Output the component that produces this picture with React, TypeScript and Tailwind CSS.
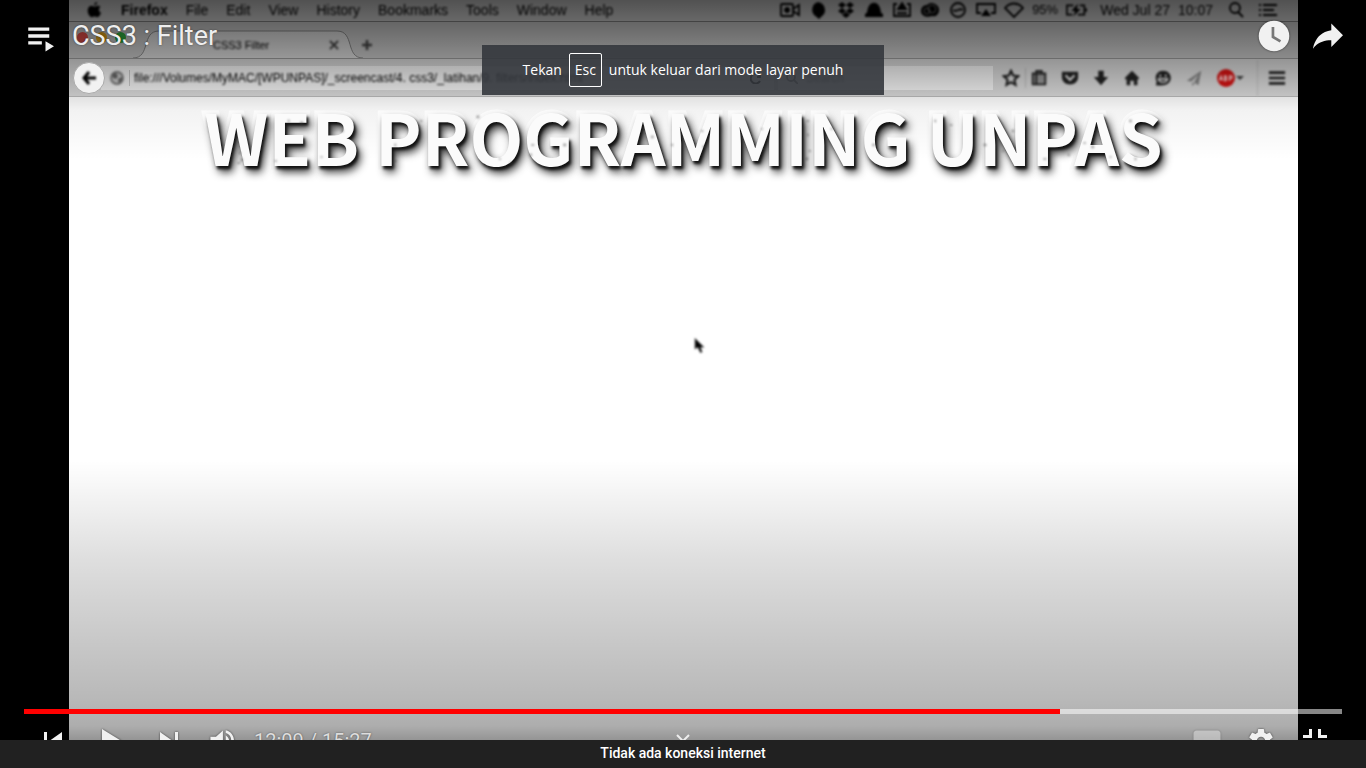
import React from "react";

type IconProps = { children: React.ReactNode; className?: string; box?: string };

const Glyph = ({ children, className = "size-5", box = "0 0 20 20" }: IconProps) => (
  <svg viewBox={box} className={`shrink-0 ${className}`} fill="none" stroke="currentColor" strokeWidth="1.8" aria-hidden="true">
    {children}
  </svg>
);

const PlayerIcon = ({ children, className = "size-[54px]" }: IconProps) => (
  <svg viewBox="0 0 36 36" className={`shrink-0 drop-shadow-[0_0_1px_rgba(0,0,0,0.6)] ${className}`} fill="#f1f1f1" aria-hidden="true">
    {children}
  </svg>
);

const menus = ["File", "Edit", "View", "History", "Bookmarks", "Tools", "Window", "Help"];

const specks = [
  [36, 52], [38, 59], [35, 62], [85, 20], [72, 60], [98, 22], [118, 56], [139, 30], [192, 60], [192, 44], [218, 20], [275, 16],
  [297, 58], [328, 54], [330, 44], [308, 62], [352, 24], [362, 44], [434, 58], [450, 36], [464, 60], [470, 44], [500, 30], [502, 46],
  [560, 28], [562, 48], [606, 20], [606, 34], [608, 50], [605, 58], [630, 28], [672, 44], [690, 26], [734, 20], [750, 24], [784, 44],
  [802, 50], [812, 30], [844, 58], [868, 54], [884, 42], [892, 46], [910, 56], [930, 20], [942, 48], [935, 58],
];

function MenuBar() {
  return (
    <div className="flex h-[22px] items-center justify-between border-b border-[#8a8a8a] bg-[#d6d6d6] pr-5 pb-px pl-4 text-sm leading-5 text-black">
      <div className="flex items-center gap-[18px] blur-[1px]">
        <Glyph className="size-[18px]" box="0 0 18 18">
          <path fill="currentColor" stroke="none" d="M12.2 1c.1 1.600-1.300 3.200-3 3.200C9 2.600 10.500 1.100 12.200 1zM15.500 6.100c-2.300 1.400-2 4.600.5 5.600-.6 1.800-2.100 4.500-3.700 4.500-1.100 0-1.500-.7-2.800-.7s-1.700.7-2.700.7C4.700 16.200 2.700 12.600 2.700 9.600c0-3 1.900-4.900 3.900-4.900 1.200 0 2.100.8 2.900.8.8 0 1.900-.9 3.400-.8 1 0 2 .5 2.600 1.400z" />
        </Glyph>
        <b>Firefox</b>
        {menus.map((m) => (
          <span key={m}>{m}</span>
        ))}
      </div>
      <div className="flex items-center gap-2 blur-[1px]">
        <Glyph><rect x="1" y="4" width="12" height="12" rx="1" /><path d="M13 9l6-4v10l-6-4" /><circle cx="7" cy="10" r="2" fill="currentColor" /></Glyph>
        <Glyph><path fill="#000" stroke="none" d="M10 2a8 8 0 0 1 3.500 14.500L11 19l-3-2.500A8 8 0 0 1 10 2z" /></Glyph>
        <Glyph><path fill="currentColor" stroke="none" d="M6 2l4 3-4 3-4-3zM14 2l4 3-4 3-4-3zM6 8l4 3-4 3-4-3zM14 8l4 3-4 3-4-3zM6 15l4-3 4 3-4 3z" /></Glyph>
        <Glyph><path fill="currentColor" stroke="none" d="M1 14c3-1 2-4 3-6 2-7 10-7 12 0 1 2 0 5 3 6v3H1z" /></Glyph>
        <Glyph><path d="M5 4H2v12h16V4h-3M5 13h10" /><path fill="currentColor" d="M10 3l4 6H6z" /></Glyph>
        <Glyph><path fill="currentColor" stroke="none" d="M7 5c5-5 13 0 12 6-1 4-3 6-7 5-5 2-11 0-11-5 0-3 2-6 6-6z" /><circle cx="7" cy="11" r="3" stroke="#888" strokeWidth="1" /><circle cx="12" cy="9" r="4" stroke="#888" strokeWidth="1" /></Glyph>
        <Glyph><circle cx="10" cy="10" r="7" /><path d="M5 10c4 3 6-3 10 0" /></Glyph>
        <Glyph><path d="M5 13H1V4h18v9h-4" /><path fill="#000" stroke="none" d="M10 9l5 7H5z" /></Glyph>
        <Glyph><path d="M1 8c5-6 13-6 18 0l-9 9z" /></Glyph>
        <span className="text-[13px]">95%</span>
        <Glyph className="h-5 w-[22px]" box="0 0 24 20"><path d="M8 5H1v10h6M15 5h5v10h-7M22 8v4" /><path fill="currentColor" stroke="none" d="M13 3L6 11h4l-2 6 8-8h-4z" /></Glyph>
        <span className="pl-1">Wed Jul 27</span>
        <span className="pr-[5px]">10:07</span>
        <Glyph><circle cx="9" cy="8" r="5" /><path d="M12 12l5 5" /></Glyph>
        <Glyph className="ml-1 size-5"><path d="M1 5h2M5 5h14M1 10h2M5 10h11M1 15h2M5 15h14" strokeWidth="2" /></Glyph>
      </div>
    </div>
  );
}

function TabStrip() {
  return (
    <div className="flex h-[37px] items-end border-b border-[#a0a0a0] bg-[#cfcfcf] text-[11px] text-black">
      <div className="flex h-[37px] w-16 items-center gap-2 pb-1 pl-2">
        <span className="size-[11px] rounded-full bg-[#e8504a]" />
        <span className="size-[11px] rounded-full bg-[#e8a91c]" />
        <span className="size-[11px] rounded-full bg-[#32b441]" />
      </div>
      <div className="relative h-7 w-[232px]">
        <svg className="absolute inset-0 size-full" viewBox="0 0 232 28" fill="#e2e2e2" stroke="#8d8d8d" aria-hidden="true">
          <path d="M0 28C18 28 8 1 26 1H204C222 1 212 28 230 28" />
        </svg>
        <div className="relative flex h-7 items-center justify-between pt-[2px] pr-[25px] pl-20 blur-[1px]">
          <span>CSS3 Filter</span>
          <Glyph className="size-3 text-[#444]" box="0 0 12 12"><path d="M2 2l8 8M10 2l-8 8" /></Glyph>
        </div>
      </div>
      <div className="-ml-1 flex h-7 items-center pt-[2px] text-[#444]">
        <Glyph className="size-3 blur-[1px]" box="0 0 12 12"><path d="M6 1v10M1 6h10" strokeWidth="2.500" /></Glyph>
      </div>
    </div>
  );
}

function Toolbar() {
  return (
    <div className="flex h-[38px] items-center border-b border-[#bdbdbd] bg-[#dcdcdc] pr-3 pl-1 text-xs text-black">
      <div className="z-10 flex size-8 shrink-0 items-center justify-center rounded-full border border-[#aaa] bg-[#f2f2f2]">
        <Glyph className="size-4 blur-[1px]" box="0 0 16 16"><path d="M8 2L3 8l5 6M3 8h12" strokeWidth="3" /></Glyph>
      </div>
      <div className="-ml-1 flex h-6 min-w-0 flex-1 items-center bg-[#f6f6f6] pl-2">
        <Glyph className="size-4 text-[#777] blur-[1px]" box="0 0 16 16"><circle cx="8" cy="8" r="6" fill="#ccc" /><path fill="#666" stroke="none" d="M3 4l4-1 2 3-2 3-3-1zM9 9l4-2v3l-3 4z" /></Glyph>
        <span className="mr-1 ml-1 h-4 border-l border-[#ccc]" />
        <span className="flex-1 blur-[1px]">file:///Volumes/MyMAC/[WPUNPAS]/_screencast/4. css3/_latihan/9. filters/index.html</span>
        <Glyph className="mr-3 size-3" box="0 0 12 12"><path d="M10 4a5 5 0 1 0 0 5M10 1v4H7" strokeWidth="2" /></Glyph>
      </div>
      <div className="ml-1 flex h-6 w-[215px] items-center gap-2 bg-[#f6f6f6] pl-2 text-[#777]">
        <Glyph className="size-3" box="0 0 12 12"><circle cx="5" cy="5" r="4" /><path d="M8 8l4 4" /></Glyph>
        <span className="blur-[1px]">Search</span>
      </div>
      <div className="ml-[9px] flex items-center gap-[13px] text-[#222] blur-[1px]">
        <Glyph className="size-[18px]"><path d="M10 2l2.400 5.200 5.600.7-4.200 3.900 1.200 5.700-5-2.900-5 2.900 1.200-5.700L2 7.900l5.600-.7z" strokeWidth="2.400" /></Glyph>
        <div className="-ml-2 flex items-center gap-1">
          <span className="h-5 border-l border-[#bbb]" />
          <Glyph className="size-[18px]"><path fill="#999" d="M3 5h14v12H3zM7 5V2h6v3M7 6v11" strokeWidth="2" /></Glyph>
        </div>
        <Glyph className="size-[18px]"><path fill="currentColor" stroke="none" d="M1 3h18v6c0 11-18 11-18 0z" /><path stroke="#ddd" strokeWidth="2.500" d="M5 7l5 5 5-5" /></Glyph>
        <Glyph className="size-[18px]"><path fill="currentColor" stroke="none" d="M7 2h6v7h5l-8 9-8-9h5z" /></Glyph>
        <Glyph className="size-[18px]"><path fill="currentColor" stroke="none" d="M10 2l8 8-1.500 2L16 11v7h-4v-5H8v5H4v-7l-1 1L2 10z" /></Glyph>
        <Glyph className="size-[18px]"><path fill="currentColor" stroke="none" d="M10 2c12 0 11 16 0 16-3 0-5 1-8 0l1-4C0 9 3 2 10 2z" /><path stroke="#ddd" d="M7 6v3M13 6v3M5 11h10c-1 5-9 5-10 0z" /></Glyph>
        <Glyph className="size-[18px] text-[#888]"><path fill="currentColor" stroke="none" d="M18 2L2 13l5 1 8-8-5 9 5 3zM8 15l3 1-3 3z" /></Glyph>
        <div className="flex items-center">
          <Glyph className="size-5"><circle cx="10" cy="10" r="9" fill="#d91414" stroke="none" /><path stroke="#ffd0d0" strokeWidth="1.300" d="M3.500 12.500L5 8l1.500 4.500M4 11h2M8.500 8v4.500h1.500q1.500-1.200 0-2.300q1.200-1.200 0-2.200zM13.500 13V8h2q1.500 1.300 0 2.500h-2" /></Glyph>
          <Glyph className="size-2" box="0 0 8 8"><path fill="#444" stroke="none" d="M0 2h8L4 6z" /></Glyph>
        </div>
        <div className="flex h-9 items-center border-l border-[#c4c4c4] pl-[10px]">
          <Glyph className="size-[18px]"><path d="M1 4h18M1 10h18M1 16h18" strokeWidth="3" /></Glyph>
        </div>
      </div>
    </div>
  );
}

function Video() {
  return (
    <div className="relative flex-1 overflow-hidden bg-white font-['Liberation_Sans',sans-serif]">
      <MenuBar />
      <TabStrip />
      <Toolbar />
      <div className="relative z-10 mx-auto mt-1 w-fit">
        <h2 className="font-['Noto_Sans_CJK_SC',sans-serif] text-[70px] leading-[70px] font-bold whitespace-nowrap text-[#fbfbfb] [-webkit-text-stroke:7px_#fbfbfb] [paint-order:stroke_fill] [text-shadow:2px_3px_3px_#111,4px_6px_8px_#333]">
          WEB PROGRAMMING UNPAS
        </h2>
        <svg viewBox="0 0 962 70" className="absolute inset-0 size-full blur-[1px]" fill="#444" opacity=".5" aria-hidden="true">
          {specks.map(([x, y], i) => (
            <ellipse key={i} cx={x} cy={y} rx={1 + (i % 3) / 3} ry={1 + (i % 2) / 2} />
          ))}
        </svg>
      </div>
      <svg viewBox="0 0 12 18" className="absolute top-[337px] left-1/2 ml-[10px] h-[17px] w-[11px] blur-[1px]" aria-hidden="true">
        <path d="M1 1v12l3-2 3 6 2-1-2-5h4z" fill="#000" stroke="#777" strokeWidth=".6" />
      </svg>
      <div className="pointer-events-none absolute inset-x-0 top-0 h-[200px] bg-[linear-gradient(to_bottom,rgba(0,0,0,0.62)_0px,rgba(0,0,0,0.5)_24px,rgba(0,0,0,0.34)_56px,rgba(0,0,0,0.14)_92px,rgba(0,0,0,0.05)_110px,transparent_160px)]" />
      <div className="pointer-events-none absolute inset-x-0 bottom-0 h-[280px] bg-[linear-gradient(to_bottom,transparent,rgba(0,0,0,0.13)_100px,rgba(0,0,0,0.28)_240px,rgba(0,0,0,0.32)_266px,rgba(0,0,0,0.42)_280px)]" />
    </div>
  );
}

function PlayerHeader() {
  return (
    <header className="absolute inset-x-0 top-[9px] flex items-center px-[11px]">
      <button aria-label="Playlist">
        <PlayerIcon><path d="m23 21.420v6.850l5.660-3.420zM11.500 21.420h9.060v2.280H11.500zM11.500 12.280h14v2.280h-14zM11.500 16.850h14v2.280h-14z" /></PlayerIcon>
      </button>
      <h1 className="ml-[7px] flex-1 text-[27px] leading-[54px] text-[#eee] [text-shadow:0_0_2px_rgba(0,0,0,0.5)]">CSS3 : Filter</h1>
      <button aria-label="Tonton nanti">
        <PlayerIcon><circle cx="18" cy="18" r="10.200" /><path d="M17.300 12v6.600l5 3" fill="none" stroke="#777" strokeWidth="1.800" /></PlayerIcon>
      </button>
      <button aria-label="Bagikan">
        <PlayerIcon><path d="m20.200 14.190v-4.450l7.790 7.790-7.790 7.790v-4.560C16.270 20.690 12.100 21.810 9.340 24.760 8.800 25.130 7.600 27.290 8.120 25.650 9.080 21.320 11.800 17.180 15.980 15.380c1.330-.6 2.760-.98 4.210-1.190z" /></PlayerIcon>
      </button>
    </header>
  );
}

function PlayerControls() {
  return (
    <div className="absolute inset-x-0 -bottom-7 px-6">
      <div role="progressbar" aria-label="Progres" aria-valuenow={729} aria-valuemax={927} className="h-[5px] bg-white/53">
        <div className="h-full bg-[#f00]" style={{ width: `${(729 / 927) * 100}%` }} />
      </div>
      <div className="relative flex h-[54px] items-center justify-between">
        <div className="flex items-center gap-1 pl-[2px]">
          <button aria-label="Sebelumnya"><PlayerIcon><path d="M12 12h2v12h-2zM15.500 18l8.500 6V12z" /></PlayerIcon></button>
          <button aria-label="Putar"><PlayerIcon><path d="M12 10l13 8-13 8z" /></PlayerIcon></button>
          <button aria-label="Berikutnya"><PlayerIcon><path d="M12 24l8.500-6L12 12zM22 12v12h2V12z" /></PlayerIcon></button>
          <button aria-label="Volume">
            <PlayerIcon className="size-[50px]"><path d="M7.500 21h4l5 5V10.500l-5 4.500h-4zM18.500 14v8c1.480-.68 2.500-2.230 2.500-4s-1.020-3.260-2.500-4zM18.500 12.290c2.890.86 4 3.040 4 5.710s-1.110 4.850-4 5.710v2.060c4.010-.91 6-3.990 6-7.770s-1.990-6.860-6-7.770z" /></PlayerIcon>
          </button>
          <span className="text-xl text-[#ddd] [text-shadow:0_0_2px_rgba(0,0,0,0.5)]">12:09 / 15:27</span>
        </div>
        <button aria-label="Selengkapnya" className="absolute top-5 left-1/2 -ml-[7px]">
          <svg viewBox="0 0 14 10" className="h-[10px] w-[14px]" fill="none" stroke="#eee" strokeWidth="2" aria-hidden="true"><path d="M1 1l6 6 6-6" /></svg>
        </button>
        <div className="flex items-center">
          <button aria-label="Subtitel" className="opacity-40"><PlayerIcon><path fillRule="evenodd" d="M11 11c-1.110 0-2 .9-2 2v10c0 1.100.89 2 2 2h14c1.100 0 2-.9 2-2V13c0-1.100-.9-2-2-2zM11 17.300h4v1.400h-4zM17 17.300h8v1.400h-8zM11 21h8v1.500h-8zM21 21h4v1.500h-4z" /></PlayerIcon></button>
          <button aria-label="Setelan">
            <PlayerIcon><path d="m 23.94,18.78 c .03,-0.25 .05,-0.51 .05,-0.78 0,-0.27 -0.02,-0.52 -0.05,-0.78 l 1.68,-1.32 c .15,-0.12 .19,-0.33 .09,-0.51 l -1.6,-2.76 c -0.09,-0.17 -0.31,-0.24 -0.48,-0.17 l -1.99,.8 c -0.41,-0.32 -0.86,-0.58 -1.35,-0.78 l -0.30,-2.12 c -0.02,-0.19 -0.19,-0.33 -0.39,-0.33 l -3.2,0 c -0.2,0 -0.36,.14 -0.39,.33 l -0.30,2.12 c -0.48,.2 -0.93,.47 -1.35,.78 l -1.99,-0.8 c -0.18,-0.07 -0.39,0 -0.48,.17 l -1.6,2.76 c -0.10,.17 -0.05,.39 .09,.51 l 1.68,1.32 c -0.03,.25 -0.05,.52 -0.05,.78 0,.26 .02,.52 .05,.78 l -1.68,1.32 c -0.15,.12 -0.19,.33 -0.09,.51 l 1.6,2.76 c .09,.17 .31,.24 .48,.17 l 1.99,-0.8 c .41,.32 .86,.58 1.35,.78 l .30,2.12 c .02,.19 .19,.33 .39,.33 l 3.2,0 c .2,0 .36,-0.14 .39,-0.33 l .30,-2.12 c .48,-0.2 .93,-0.47 1.35,-0.78 l 1.99,.8 c .18,.07 .39,0 .48,-0.17 l 1.6,-2.76 c .09,-0.17 .05,-0.39 -0.09,-0.51 l -1.68,-1.32 z m -5.94,2.01 c -1.54,0 -2.8,-1.25 -2.8,-2.8 0,-1.54 1.25,-2.8 2.8,-2.8 1.54,0 2.8,1.25 2.8,2.8 0,1.54 -1.25,2.8 -2.8,2.8 z" /></PlayerIcon>
          </button>
          <button aria-label="Keluar dari layar penuh"><PlayerIcon><path d="M14 14h-4v2h6v-6h-2zM22 14v-4h-2v6h6v-2zM20 26h2v-4h4v-2h-6zM10 22h4v4h2v-6h-6z" /></PlayerIcon></button>
        </div>
      </div>
    </div>
  );
}

export default function App() {
  return (
    <div className="flex min-h-screen flex-col bg-black font-[Roboto,sans-serif]">
      <main className="relative flex flex-1 overflow-hidden pr-[68px] pl-[69px]">
        <Video />
        <PlayerHeader />
        <div role="status" className="absolute top-[45px] left-1/2 z-20 flex h-[50px] w-[402px] -translate-x-1/2 items-center justify-center gap-[7px] bg-[#34373d]/90 font-['Open_Sans','Noto_Sans',sans-serif] text-sm whitespace-nowrap text-white">
          <span>Tekan</span>
          <kbd className="flex h-[34px] w-[33px] items-center justify-center rounded-xs border border-white font-[inherit]">Esc</kbd>
          <span>untuk keluar dari mode layar penuh</span>
        </div>
        <PlayerControls />
      </main>
      <footer className="z-10 flex h-7 items-center justify-center bg-[#212121] pb-[2px] text-sm font-medium text-white">Tidak ada koneksi internet</footer>
    </div>
  );
}
